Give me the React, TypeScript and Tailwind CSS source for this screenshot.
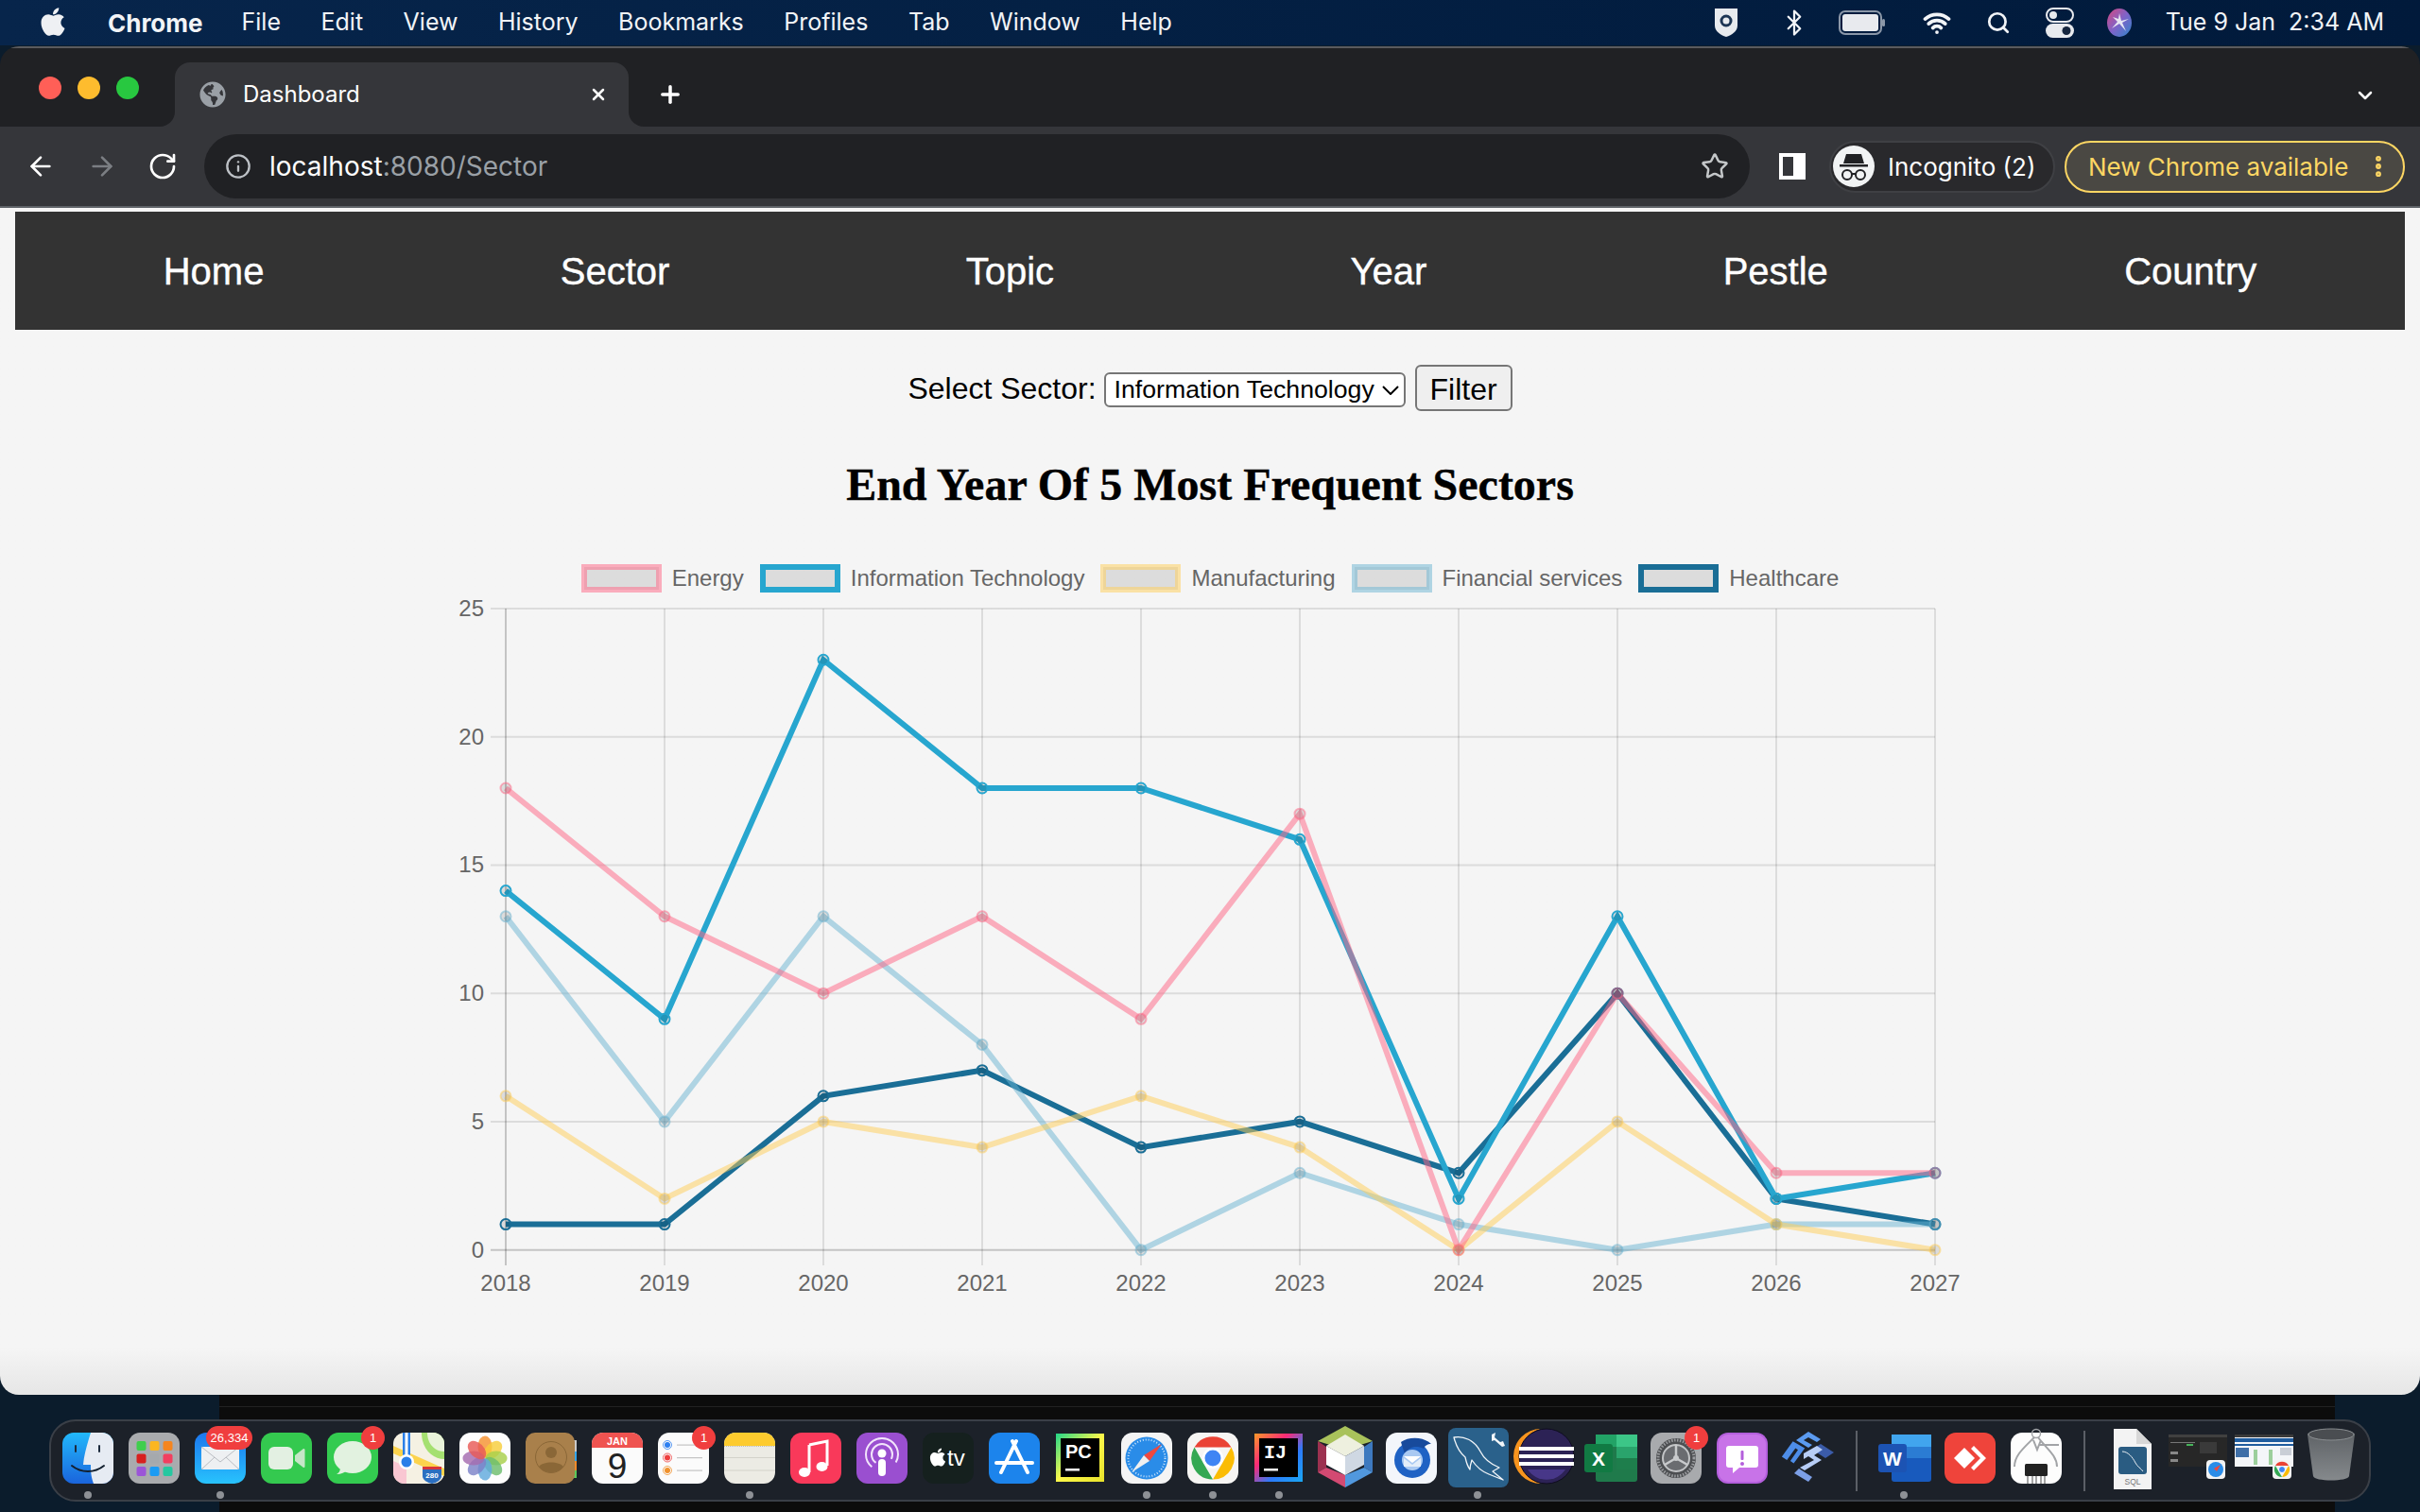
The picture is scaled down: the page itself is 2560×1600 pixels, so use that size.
import type { ReactNode } from 'react'
import { ArrowLeft, ArrowRight, Bluetooth, ChevronDown, EllipsisVertical, Info, Plus, RotateCw, Search, Star, Wifi, X } from 'lucide-react'
import { FaApple, FaGlobeAmericas } from 'react-icons/fa'

const SANS = "font-['Liberation_Sans',Arial,sans-serif]"

const YEARS = [2018, 2019, 2020, 2021, 2022, 2023, 2024, 2025, 2026, 2027]

const SERIES = [
  { name: 'Healthcare', color: '#1a6e96', data: [1, 1, 6, 7, 4, 5, 3, 10, 2, 1] },
  { name: 'Financial services', color: 'rgba(105,180,210,0.5)', data: [13, 5, 13, 8, 0, 3, 1, 0, 1, 1] },
  { name: 'Manufacturing', color: 'rgba(255,206,86,0.5)', data: [6, 2, 5, 4, 6, 4, 0, 5, 1, 0] },
  { name: 'Information Technology', color: '#27a6cf', data: [14, 9, 23, 18, 18, 16, 2, 13, 2, 3] },
  { name: 'Energy', color: 'rgba(255,99,132,0.5)', data: [18, 13, 10, 13, 9, 17, 0, 10, 3, 3] },
]

const xAt = (i: number) => 535 + 168 * i
const yAt = (v: number) => 1322.7 - 27.15 * v

function Chart() {
  return (
    <svg width={1640} height={740} viewBox="460 630 1640 740" className={`block mx-auto mt-[3px] ${SANS}`}>
      {[0, 5, 10, 15, 20, 25].map((v) => (
        <g key={v}>
          <line x1={519} x2={2047} y1={yAt(v)} y2={yAt(v)} stroke={v === 0 ? 'rgba(0,0,0,0.2)' : 'rgba(0,0,0,0.1)'} strokeWidth={2} />
          <text x={512} y={yAt(v) + 8} textAnchor="end" fontSize={24} fill="#666">{v}</text>
        </g>
      ))}
      {YEARS.map((year, i) => (
        <g key={year}>
          <line x1={xAt(i)} x2={xAt(i)} y1={644} y2={1339} stroke={i === 0 ? 'rgba(0,0,0,0.2)' : 'rgba(0,0,0,0.1)'} strokeWidth={2} />
          <text x={xAt(i)} y={1366} textAnchor="middle" fontSize={24} fill="#666">{year}</text>
        </g>
      ))}
      {SERIES.map((s) => (
        <g key={s.name}>
          <polyline
            points={s.data.map((v, i) => `${xAt(i)},${yAt(v)}`).join(' ')}
            fill="none"
            stroke={s.color}
            strokeWidth={6}
            strokeLinejoin="miter"
          />
          {s.data.map((v, i) => (
            <circle key={i} cx={xAt(i)} cy={yAt(v)} r={5.5} fill="rgba(0,0,0,0.1)" stroke={s.color} strokeWidth={2} />
          ))}
        </g>
      ))}
    </svg>
  )
}

function LegendItem({ name, color }: { name: string; color: string }) {
  return (
    <div className="flex items-center gap-[11px]">
      <div className="w-[85px] h-[30px] border-[3px]" style={{ borderColor: color }}>
        <div className="w-full h-full border-[3px] bg-[rgba(0,0,0,0.1)]" style={{ borderColor: color }} />
      </div>
      <span className="text-[24px] leading-[30px] text-[#666]">{name}</span>
    </div>
  )
}

function MenuBar() {
  const items = ['File', 'Edit', 'View', 'History', 'Bookmarks', 'Profiles', 'Tab', 'Window', 'Help']
  return (
    <div className="h-[48px] flex items-center bg-gradient-to-r from-[#07254b] to-[#011a3b] text-[#f2f4f7] text-[25px] font-['Inter',sans-serif] pr-[38px]">
      <FaApple className="ml-[41px] w-[30px] h-[34px] -mt-[3px] text-[#eef0f3]" />
      <span className="ml-[43px] font-bold text-[26px]">Chrome</span>
      <div className="flex gap-[42.5px] ml-[41px]">
        {items.map((item) => (
          <span key={item}>{item}</span>
        ))}
      </div>
      <svg viewBox="0 0 26 32" className="ml-auto w-[26px] h-[32px]">
        <path d="M1 1h24v18c0 6-6 10-12 12C7 29 1 25 1 19z" fill="#e8eaee" />
        <circle cx="13" cy="14" r="5" fill="none" stroke="#1d3554" strokeWidth="3" />
      </svg>
      <Bluetooth className="ml-[44px] w-[30px] h-[32px]" strokeWidth={1.8} />
      <svg viewBox="0 0 50 26" className="ml-[32px] w-[50px] h-[26px]">
        <rect x="1" y="1" width="44" height="24" rx="6" fill="none" stroke="#8b97a8" strokeWidth="2" />
        <rect x="4" y="4" width="38" height="18" rx="3" fill="#e8eaee" />
        <rect x="46" y="9" width="3" height="8" rx="1.5" fill="#8b97a8" />
      </svg>
      <Wifi className="ml-[39px] w-[30px] h-[30px]" strokeWidth={3} />
      <Search className="ml-[37px] w-[26px] h-[26px]" strokeWidth={2.5} />
      <svg viewBox="0 0 30 32" className="ml-[37px] w-[30px] h-[32px]">
        <rect x="1" y="1" width="28" height="14" rx="7" fill="none" stroke="#e8eaee" strokeWidth="2" />
        <circle cx="8" cy="8" r="4" fill="#e8eaee" />
        <rect x="0" y="17" width="30" height="15" rx="7.5" fill="#e8eaee" />
        <circle cx="22" cy="24.5" r="4.5" fill="#16263f" />
      </svg>
      <svg viewBox="0 0 26 30" className="ml-[35px] w-[26px] h-[30px]">
        <defs>
          <linearGradient id="siri" x1="0" y1="0" x2="1" y2="1">
            <stop offset="0" stopColor="#d6487e" />
            <stop offset="0.5" stopColor="#7f63c9" />
            <stop offset="1" stopColor="#2e86c9" />
          </linearGradient>
        </defs>
        <ellipse cx="13" cy="15" rx="13" ry="15" fill="url(#siri)" />
        <path d="M13 5l2 8 8-2-7 4 4 9-7-8-8 5 6-7-5-5 6 2z" fill="#f2f4f7" opacity="0.9" />
      </svg>
      <span className="ml-[36px] whitespace-pre">Tue 9 Jan  2:34 AM</span>
    </div>
  )
}

function IncognitoIcon() {
  return (
    <svg viewBox="0 0 44 44" className="w-[44px] h-[44px] shrink-0">
      <circle cx="22" cy="22" r="22" fill="#f1f3f4" />
      <path d="M14 9h16l3 10H11z" fill="#202124" />
      <rect x="7" y="20" width="30" height="2.5" fill="#202124" />
      <circle cx="15" cy="31" r="5" fill="none" stroke="#202124" strokeWidth="2" />
      <circle cx="29" cy="31" r="5" fill="none" stroke="#202124" strokeWidth="2" />
      <path d="M20 30h4" stroke="#202124" strokeWidth="2" />
    </svg>
  )
}

function TabStrip() {
  return (
    <div className="h-[85px] bg-[#202124] border-t-2 border-[#5a5b5e] flex items-end text-white font-['Inter',sans-serif]">
      <div className="flex gap-[17px] ml-[41px] mb-[29px]">
        <div className="w-[24px] h-[24px] rounded-full bg-[#ff5f57]" />
        <div className="w-[24px] h-[24px] rounded-full bg-[#febc2e]" />
        <div className="w-[24px] h-[24px] rounded-full bg-[#28c840]" />
      </div>
      <div className="relative ml-[38px] w-[480px] h-[68px] bg-[#35363a] rounded-t-[16px] flex items-center pl-[26px] pr-[22px]">
        <div className="absolute -left-[16px] bottom-0 w-[16px] h-[16px] bg-[#35363a]">
          <div className="w-full h-full bg-[#202124] rounded-br-[16px]" />
        </div>
        <div className="absolute -right-[16px] bottom-0 w-[16px] h-[16px] bg-[#35363a]">
          <div className="w-full h-full bg-[#202124] rounded-bl-[16px]" />
        </div>
        <FaGlobeAmericas className="w-[28px] h-[28px] text-[#9aa0a6]" />
        <span className="ml-[18px] text-[24px]">Dashboard</span>
        <X className="ml-auto w-[20px] h-[20px]" strokeWidth={3} />
      </div>
      <Plus className="ml-[30px] mb-[20px] w-[28px] h-[28px]" strokeWidth={3} />
      <ChevronDown className="ml-auto mr-[46px] mb-[21px] w-[24px] h-[24px]" strokeWidth={2.5} />
    </div>
  )
}

function Toolbar() {
  return (
    <div className="h-[84px] bg-[#35363a] flex items-center text-white font-['Inter',sans-serif]">
      <ArrowLeft className="ml-[27px] w-[32px] h-[32px]" strokeWidth={2} />
      <ArrowRight className="ml-[33px] w-[32px] h-[32px] text-[#7b7e83]" strokeWidth={2} />
      <RotateCw className="ml-[32px] w-[32px] h-[32px]" strokeWidth={2} />
      <div className="ml-[28px] w-[1635px] h-[68px] rounded-full bg-[#202124] flex items-center pl-[24px] pr-[22px]">
        <Info className="w-[28px] h-[28px] -ml-[2px] -mr-[2px] text-[#bdc1c6]" strokeWidth={2} />
        <span className="ml-[21px] text-[28px] text-white">localhost<span className="text-[#9aa0a6]">:8080/Sector</span></span>
        <Star className="ml-auto w-[30px] h-[30px] text-[#c4c7c9]" strokeWidth={2} />
      </div>
      <div className="ml-[31px] w-[28px] h-[28px] bg-white flex justify-start pl-[4px] py-[4px]">
        <div className="w-[11px] h-full bg-[#35363a]" />
      </div>
      <div className="ml-[25px] w-[239px] h-[55px] rounded-full bg-[#29292c] border-2 border-[#3f4044] flex items-center pl-[2px] gap-[14px]">
        <IncognitoIcon />
        <span className="text-[26px] whitespace-nowrap">Incognito (2)</span>
      </div>
      <div className="ml-[10px] w-[360px] h-[55px] rounded-full bg-[#4a4843] border-2 border-[#fdd663] flex items-center pl-[23px] text-[#fdd663]">
        <span className="text-[26px] whitespace-nowrap">New Chrome available</span>
        <EllipsisVertical className="ml-auto mr-[12px] w-[28px] h-[28px]" strokeWidth={3} />
      </div>
    </div>
  )
}

function Page() {
  const nav = ['Home', 'Sector', 'Topic', 'Year', 'Pestle', 'Country']
  const legend = ['Energy', 'Information Technology', 'Manufacturing', 'Financial services', 'Healthcare']
  return (
    <div className={`h-[1256px] pt-[4px] bg-gradient-to-b from-[#f5f5f5] via-[#f5f5f5] via-[96%] to-[#e6e6e6] ${SANS}`}>
      <div className="mx-[16px] h-[125px] bg-[#333] flex items-center justify-around text-white text-[40px] [-webkit-text-stroke:0.4px_white]">
        {nav.map((item) => (
          <span key={item}>{item}</span>
        ))}
      </div>
      <div className="mt-[37px] h-[49px] flex items-center justify-center text-[32px] text-black">
        <span>Select Sector:</span>
        <div className="relative ml-[8px] mt-[4px]">
          <select className="block appearance-none w-[319px] h-[37px] bg-white border-2 border-[#767676] rounded-[6px] pl-[9px] text-[26.67px] leading-none text-black">
            <option>Information Technology</option>
          </select>
          <svg viewBox="0 0 18 10" className="absolute right-[7px] top-[14px] w-[18px] h-[10px]">
            <path d="M1 1l8 8 8-8" fill="none" stroke="#000" strokeWidth="2" />
          </svg>
        </div>
        <button className="ml-[10px] w-[103px] h-[49px] bg-[#efefef] border-2 border-[#767676] rounded-[6px] text-[32px] text-black">Filter</button>
      </div>
      <h1 className="mt-[50px] h-[56px] leading-[56px] text-center text-[48px] font-bold text-black font-['Liberation_Serif','Times_New_Roman',serif] [-webkit-text-stroke:0.4px_black]">
        End Year Of 5 Most Frequent Sectors
      </h1>
      <div className="mt-[56px] flex justify-center gap-[17px]">
        {legend.map((name) => (
          <LegendItem key={name} name={name} color={SERIES.find((s) => s.name === name)!.color} />
        ))}
      </div>
      <Chart />
    </div>
  )
}

function Tile({ children, fill }: { children?: ReactNode; fill: string }) {
  return (
    <>
      <rect width="54" height="54" rx="12" fill={fill} />
      {children}
    </>
  )
}

const ICONS: Record<string, ReactNode> = {
  finder: (
    <>
      <defs>
        <linearGradient id="fd" x1="0" y1="0" x2="0" y2="1">
          <stop offset="0" stopColor="#22b8fb" />
          <stop offset="1" stopColor="#1a64dc" />
        </linearGradient>
      </defs>
      <Tile fill="url(#fd)">
        <path d="M30 0h12a12 12 0 0 1 12 12v30a12 12 0 0 1-12 12H33c-3-8-3-14-3-20h-8c1-12 5-24 8-34z" fill="#e6ebf3" />
        <path d="M14 14v6M39 14v6" stroke="#1c2a3c" strokeWidth="2" strokeLinecap="round" />
        <path d="M10 35c10 8 24 8 34 0" fill="none" stroke="#13202f" strokeWidth="2" strokeLinecap="round" />
      </Tile>
    </>
  ),
  launchpad: (
    <Tile fill="#a9abae">
      {['#3fce4d', '#fbb621', '#f5851f', '#d8201f', '#a5a9ad', '#f23f5f', '#9b55d8', '#1b9bf4', '#26c8a0'].map((c, i) => (
        <rect key={i} x={8.5 + (i % 3) * 14} y={9 + Math.floor(i / 3) * 13.5} width="10" height="10" rx="2" fill={c} />
      ))}
    </Tile>
  ),
  mail: (
    <>
      <defs>
        <linearGradient id="ml" x1="0" y1="0" x2="0" y2="1">
          <stop offset="0" stopColor="#1b76ee" />
          <stop offset="1" stopColor="#28c3fd" />
        </linearGradient>
      </defs>
      <Tile fill="url(#ml)">
        <rect x="7" y="15" width="40" height="24" rx="2" fill="#eef0f2" />
        <path d="M7 15l20 16 20-16M7 39l14-13M47 39L33 26" fill="none" stroke="#b9bdc2" strokeWidth="1" />
      </Tile>
    </>
  ),
  facetime: (
    <Tile fill="#34c94f">
      <rect x="8" y="15" width="26" height="24" rx="6" fill="#e3f0e2" />
      <path d="M36 24l9-7c1 0 1.500 .5 1.500 1.500v17c0 1-.5 1.500-1.500 1.500l-9-7z" fill="#c6e6c8" />
    </Tile>
  ),
  messages: (
    <Tile fill="#33cb50">
      <ellipse cx="27" cy="26" rx="20" ry="17" fill="#e2f2e0" />
      <path d="M14 37c0 4-2 6-4 7 5 0 9-2 11-4z" fill="#e2f2e0" />
    </Tile>
  ),
  maps: (
    <Tile fill="#f5f1e3">
      <path d="M30 0h12a12 12 0 0 1 12 12v16C42 28 30 18 30 0z" fill="#a5e070" />
      <path d="M36 0c0 12 8 20 18 20V12A12 12 0 0 0 42 0z" fill="#e9f3da" />
      <path d="M0 14l54 24v8L0 22z" fill="#fcd34d" />
      <path d="M0 30v12a12 12 0 0 0 12 12h2V36z" fill="#f9c7d2" />
      <rect x="10" y="0" width="8" height="26" fill="#2a7fe8" />
      <rect x="12.500" y="0" width="3" height="24" fill="#fff" />
      <circle cx="14" cy="31" r="8" fill="#fff" />
      <circle cx="14" cy="31" r="5.500" fill="#2a7fe8" />
      <path d="M31 36h20v10c0 4-5 7-10 8-5-1-10-4-10-8z" fill="#2b6fc0" />
      <path d="M31 36h20v3H31z" fill="#d8353a" />
      <text x="41" y="48" textAnchor="middle" fontSize="8" fontWeight="700" fill="#fff" fontFamily="Liberation Sans">280</text>
    </Tile>
  ),
  photos: (
    <Tile fill="#fdfdfd">
      {['#f59331', '#f6cd3a', '#a8cf4b', '#6cbd6d', '#60a9dd', '#7b83c8', '#a56bb0', '#e85a57'].map((c, i) => (
        <ellipse key={i} cx="27" cy="15" rx="7.500" ry="11.500" fill={c} opacity="0.82" transform={`rotate(${i * 45} 27 27)`} />
      ))}
    </Tile>
  ),
  contacts: (
    <>
      <rect x="46" y="8" width="8" height="12" fill="#c9c9c9" />
      <rect x="46" y="20" width="8" height="10" fill="#35a7ee" />
      <rect x="46" y="30" width="8" height="10" fill="#f08b2a" />
      <rect x="46" y="40" width="8" height="8" fill="#5ec95b" />
      <rect width="52" height="54" rx="10" fill="#a9804b" />
      <circle cx="27" cy="26" r="16.500" fill="none" stroke="#8a6737" strokeWidth="1" />
      <circle cx="27" cy="21" r="6" fill="#8a6737" />
      <path d="M14 36c4-6 22-6 26 0-6 8-20 8-26 0z" fill="#8a6737" />
    </>
  ),
  calendar: (
    <Tile fill="#fbfbfb">
      <path d="M0 16V12A12 12 0 0 1 12 0h30a12 12 0 0 1 12 12v4z" fill="#ef5350" />
      <text x="27" y="13" textAnchor="middle" fontSize="11" fontWeight="700" fill="#fff" fontFamily="Liberation Sans">JAN</text>
      <text x="27" y="48" textAnchor="middle" fontSize="37" fill="#222" fontFamily="Liberation Sans">9</text>
    </Tile>
  ),
  reminders: (
    <Tile fill="#fbfbfb">
      {['#2d7ff0', '#ee3f3f', '#f0922e'].map((c, i) => (
        <g key={c}>
          <circle cx="10" cy={13 + i * 13.500} r="3" fill={c} />
          <circle cx="10" cy={13 + i * 13.500} r="4.500" fill="none" stroke={c} strokeWidth="0.800" />
          <rect x="20" y={12.500 + i * 13.500} width="27" height="1.200" fill="#c4c4c4" />
        </g>
      ))}
    </Tile>
  ),
  notes: (
    <Tile fill="#ecebe4">
      <path d="M0 14V12A12 12 0 0 1 12 0h30a12 12 0 0 1 12 12v2z" fill="#fdcb2e" />
      <path d="M0 14.500h54" stroke="#bdbcb2" strokeDasharray="1 1" />
      <path d="M0 26.500h54M0 40h54" stroke="#d3d2ca" />
    </Tile>
  ),
  music: (
    <Tile fill="#f9395a">
      <path d="M20 13l19-4v26" fill="none" stroke="#fff" strokeWidth="3" />
      <path d="M20 13v29" stroke="#fff" strokeWidth="3" />
      <ellipse cx="15" cy="42" rx="6" ry="5" fill="#fff" />
      <ellipse cx="33.500" cy="36" rx="6" ry="5" fill="#fff" />
    </Tile>
  ),
  podcasts: (
    <Tile fill="#9a4fd0">
      <circle cx="27" cy="23" r="17" fill="none" stroke="#f2e4fb" strokeWidth="2" strokeDasharray="78 29" strokeDashoffset="-38" />
      <circle cx="27" cy="23" r="11" fill="none" stroke="#f2e4fb" strokeWidth="2" strokeDasharray="50 19" strokeDashoffset="-24" />
      <circle cx="27" cy="22" r="4.500" fill="#fff" />
      <rect x="23" y="28" width="8" height="18" rx="4" fill="#fff" />
    </Tile>
  ),
  tv: (
    <Tile fill="#15201e">
      <foreignObject x="6" y="15" width="20" height="22">
        <FaApple className="w-[20px] h-[22px] text-white" />
      </foreignObject>
      <text x="26" y="35" fontSize="24" fill="#fff" fontFamily="Liberation Sans">tv</text>
    </Tile>
  ),
  appstore: (
    <Tile fill="#1c84ec">
      <path d="M29 9L13 42M25 9l16 33M8 32h38" stroke="#fff" strokeWidth="4" strokeLinecap="round" fill="none" />
    </Tile>
  ),
  pycharm: (
    <>
      <defs>
        <linearGradient id="pc" x1="0" y1="0" x2="1" y2="1">
          <stop offset="0" stopColor="#21d789" />
          <stop offset="0.5" stopColor="#fcf84a" />
          <stop offset="1" stopColor="#e8e22b" />
        </linearGradient>
      </defs>
      <rect x="1" y="1" width="51" height="51" fill="url(#pc)" />
      <rect x="6" y="6" width="41" height="41" fill="#000" />
      <text x="11" y="27" fontSize="20" fontWeight="700" fill="#fff" fontFamily="Liberation Sans">PC</text>
      <rect x="11" y="38" width="15" height="2.500" fill="#fff" />
    </>
  ),
  safari: (
    <Tile fill="#f4f4f4">
      <circle cx="27" cy="27" r="22.500" fill="#2a8ce8" />
      <circle cx="27" cy="27" r="19.500" fill="none" stroke="#cfe6fb" strokeWidth="2" strokeDasharray="1 2" />
      <path d="M43 12L24 24l6 6z" fill="#f0483e" />
      <path d="M11 42l19-12-6-6z" fill="#f0f0f0" />
    </Tile>
  ),
  chrome: (
    <Tile fill="#f6f5f3">
      <path d="M7.500 15.500A22.500 22.500 0 0 1 46.500 15.500L27 15.500z" fill="#ea4335" />
      <path d="M46.500 15.500A22.500 22.500 0 0 1 27 49.500L36.800 32.700z" fill="#fbbc04" />
      <path d="M27 49.500A22.500 22.500 0 0 1 7.500 15.500L17.200 32.700z" fill="#34a853" />
      <circle cx="27" cy="27" r="11" fill="#fff" />
      <circle cx="27" cy="27" r="8.500" fill="#3f85f4" />
    </Tile>
  ),
  idea: (
    <>
      <defs>
        <linearGradient id="ij" x1="0" y1="0" x2="1" y2="1">
          <stop offset="0" stopColor="#fb9a28" />
          <stop offset="0.35" stopColor="#fc2a76" />
          <stop offset="0.65" stopColor="#2c7bfb" />
          <stop offset="1" stopColor="#1aa7f2" />
        </linearGradient>
      </defs>
      <rect x="1" y="1" width="51" height="51" fill="url(#ij)" />
      <rect x="6" y="6" width="41" height="41" fill="#000" />
      <text x="11" y="27" fontSize="20" fontWeight="700" fill="#fff" fontFamily="Liberation Mono">IJ</text>
      <rect x="11" y="38" width="15" height="2.500" fill="#fff" />
    </>
  ),
  netbeans: (
    <>
      <path d="M27-7l29 16L27 18 -2 9z" fill="#a9c25b" />
      <path d="M-2 9v33l9-5V15z" fill="#9c3150" />
      <path d="M56 9v33l-9-5V15z" fill="#3d79bf" />
      <path d="M-2 42l29 16V45L7 37z" fill="#d34a72" />
      <path d="M56 42L27 58V45l20-8z" fill="#5198de" />
      <path d="M27 2l20 12L27 25 7 14z" fill="#eef0df" />
      <path d="M7 14l20 11v20L7 34z" fill="#fff" />
      <path d="M47 14L27 25v20l20-11z" fill="#cfd8e3" />
    </>
  ),
  thunderbird: (
    <Tile fill="#f3f6fb">
      <circle cx="28" cy="29" r="19" fill="#1f62c4" />
      <path d="M16 10c8-6 24-6 32 2-4 0-7 2-8 5-8-4-16-2-20 6-1-5-3-9-4-13z" fill="#174a9c" />
      <circle cx="28" cy="29" r="11" fill="#a9c9f2" />
      <path d="M19 25h18l-9 7z" fill="#fff" />
      <path d="M19 27v9h18v-9l-9 7z" fill="#e3edf9" />
    </Tile>
  ),
  workbench: (
    <>
      <rect x="-4" y="-5" width="64" height="63" rx="8" fill="#2a618b" />
      <path
        d="M2 5C12 3 24 8 30 20c4 8 10 13 20 17l-7 4 11 9-15-6c-8-3-14-9-18-15-1 3-2 7-2 10-3-4-4-8-5-13C8 21 4 13 2 5z"
        fill="none"
        stroke="#f2f6f9"
        strokeWidth="1.300"
        strokeLinejoin="round"
      />
      <path d="M42 2l4-2-1 5 6 5 3-1 2 5-3 1-8-7-3 1z" fill="#f2f6f9" />
    </>
  ),
  eclipse: (
    <>
      <path d="M24-4a30 30 0 0 0 0 58 29 29 0 0 1 0-58z" fill="#f7941e" />
      <circle cx="30" cy="25" r="29" fill="#2c2255" stroke="#0f0c20" strokeWidth="1" />
      <rect x="1" y="15" width="58" height="4" fill="#fff" />
      <rect x="1" y="23" width="58" height="4" fill="#fff" />
      <rect x="1" y="31" width="58" height="4" fill="#fff" />
      <path d="M10 39h40a24 24 0 0 1-40 0z" fill="#473788" />
    </>
  ),
  excel: (
    <>
      <rect x="12" y="2" width="44" height="50" rx="3" fill="#1f7a4b" />
      <rect x="34" y="2" width="22" height="13" fill="#3cc687" />
      <rect x="12" y="2" width="22" height="13" fill="#22a366" />
      <rect x="34" y="15" width="22" height="12" fill="#2aa46c" />
      <rect x="34" y="27" width="22" height="12" fill="#1e7e4c" />
      <rect x="0" y="12" width="30" height="30" rx="3" fill="#117a43" />
      <text x="15" y="35" textAnchor="middle" fontSize="21" fontWeight="700" fill="#fff" fontFamily="Liberation Sans">X</text>
    </>
  ),
  settings: (
    <Tile fill="#a8aaad">
      <circle cx="27" cy="27" r="21" fill="#4d4f52" />
      <circle cx="27" cy="27" r="19" fill="none" stroke="#9a9c9f" strokeWidth="3" strokeDasharray="1.500 1.500" />
      <circle cx="27" cy="27" r="14" fill="#6a6c70" stroke="#c2c4c6" strokeWidth="2" />
      <path d="M27 27V13M27 27L15 34M27 27l12 7" stroke="#c8cacc" strokeWidth="2.500" />
      <circle cx="27" cy="27" r="3" fill="#c8cacc" />
    </Tile>
  ),
  feedback: (
    <Tile fill="#b45fdc">
      <rect x="2" y="2" width="50" height="50" rx="10" fill="#c873e8" />
      <path d="M13 14h28a3 3 0 0 1 3 3v17a3 3 0 0 1-3 3H24l-7 6v-6h-4a3 3 0 0 1-3-3V17a3 3 0 0 1 3-3z" fill="#fff" />
      <rect x="25.500" y="19" width="3" height="10" rx="1" fill="#b45fdc" />
      <circle cx="27" cy="33" r="2" fill="#b45fdc" />
    </Tile>
  ),
  maze: (
    <>
      <path d="M27-1l13 8-4 3-9-5-5 3 9 5-4 3-13-8z" fill="#5b9bf0" />
      <path d="M14 8l-13 18 6 4 10-14 3 2-9 13 4 3 13-18z" fill="#4d8de8" transform="translate(-2 2) scale(.9)" />
      <path d="M40 12l14 9-9 6-14-9z" fill="#3b5ba8" />
      <path d="M22 22l14-8 6 4-9 6 8 5-18 11-5-3 15-8-6-4-5 3z" fill="#b7cdf6" />
      <path d="M17 38l14 9-4 5-15-9z" fill="#7c9fe6" />
    </>
  ),
  word: (
    <>
      <rect x="14" y="2" width="42" height="50" rx="3" fill="#185abd" />
      <rect x="14" y="2" width="42" height="13" fill="#41a5ee" />
      <rect x="14" y="15" width="42" height="12" fill="#2b7cd3" />
      <rect x="0" y="12" width="30" height="30" rx="3" fill="#1c53b3" />
      <text x="15" y="35" textAnchor="middle" fontSize="21" fontWeight="700" fill="#fff" fontFamily="Liberation Sans">W</text>
    </>
  ),
  anydesk: (
    <Tile fill="#ef443b">
      <path d="M21 16l11 11-11 11-11-11z" fill="#fff" />
      <path d="M31 14l13 13-13 13-3-3 10-10-10-10z" fill="#fff" />
    </Tile>
  ),
  instruments: (
    <Tile fill="#fdfdfd">
      <circle cx="27" cy="1" r="4.500" fill="none" stroke="#a2a4a7" strokeWidth="1.500" />
      <path d="M25 5C14 16 4 24 4 36M29 5c8 11 20 19 20 31M24 8l4 10 4-10M30 13h21" fill="none" stroke="#a2a4a7" strokeWidth="2" />
      <rect x="15" y="33" width="24" height="13" rx="1.500" fill="#222" />
      <path d="M18 46v8M23 46v8M27 46v8M32 46v8M36 46v8" stroke="#888" strokeWidth="1.500" />
    </Tile>
  ),
  sqlfile: (
    <>
      <path d="M0 -2h24l16 16v48H0z" fill="#f3f3f3" transform="translate(7 -2)" />
      <path d="M31-4l16 16H31z" fill="#d7d7d7" />
      <rect x="12" y="15" width="30" height="29" rx="3" fill="#2a5c82" />
      <path d="M16 20c6 0 11 6 14 12 2 4 6 6 8 9" fill="none" stroke="#e8eef3" strokeWidth="1" />
      <text x="27" y="55" textAnchor="middle" fontSize="8.500" fill="#777" fontFamily="Liberation Sans">SQL</text>
    </>
  ),
  stackDark: (
    <>
      <rect x="-5" y="2" width="62" height="34" fill="#272727" />
      <rect x="-5" y="2" width="62" height="3" fill="#404040" />
      <rect x="-3" y="10" width="26" height="1" fill="#777" />
      <rect x="14" y="12" width="7" height="2" fill="#47b35a" />
      <rect x="-3" y="20" width="8" height="3" fill="#888" />
      <rect x="-3" y="28" width="8" height="3" fill="#888" />
      <rect x="28" y="10" width="18" height="12" fill="#3a3a3a" />
      <rect x="35" y="29" width="20" height="20" rx="4" fill="#f3f3f3" />
      <circle cx="45" cy="39" r="8" fill="#2a8ce8" />
      <path d="M50 34l-7 4 3 3z" fill="#f0483e" />
    </>
  ),
  stackWeb: (
    <>
      <rect x="-5" y="2" width="62" height="34" fill="#f4f6f9" />
      <rect x="-5" y="2" width="62" height="3" fill="#3a3a3a" />
      <rect x="-5" y="6" width="62" height="4" fill="#1f5c9e" />
      <rect x="-5" y="12" width="62" height="2" fill="#1f5c9e" />
      <rect x="-4" y="16" width="14" height="10" fill="#3f6fa8" />
      <rect x="15" y="18" width="4" height="16" fill="#9ccf9c" />
      <rect x="31" y="18" width="4" height="16" fill="#9ccf9c" />
      <rect x="43" y="16" width="12" height="8" fill="#c9ced6" />
      <rect x="35" y="29" width="20" height="20" rx="4" fill="#f3f3f3" />
      <path d="M38 35a8 8 0 0 1 14 0h-7z" fill="#ea4335" />
      <path d="M52 35a8 8 0 0 1-7 12l3.500-6z" fill="#fbbc04" />
      <path d="M45 47a8 8 0 0 1-7-12l3.500 6z" fill="#34a853" />
      <circle cx="45" cy="39" r="3.500" fill="#3f85f4" stroke="#fff" />
    </>
  ),
  trash: (
    <>
      <defs>
        <linearGradient id="tr" x1="0" y1="0" x2="0" y2="1">
          <stop offset="0" stopColor="#5c6064" />
          <stop offset="1" stopColor="#85898c" />
        </linearGradient>
      </defs>
      <path d="M2 2c0-7 50-7 50 0l-6 44c-1 6-37 6-38 0z" fill="url(#tr)" />
      <ellipse cx="27" cy="2" rx="24" ry="6" fill="#4a4d51" stroke="#8a8e91" strokeWidth="1" />
    </>
  ),
}

const DOCK: { key: string; dot?: boolean; badge?: string }[] = [
  { key: 'finder', dot: true },
  { key: 'launchpad' },
  { key: 'mail', dot: true, badge: '26,334' },
  { key: 'facetime' },
  { key: 'messages', badge: '1' },
  { key: 'maps' },
  { key: 'photos' },
  { key: 'contacts' },
  { key: 'calendar' },
  { key: 'reminders', badge: '1' },
  { key: 'notes', dot: true },
  { key: 'music' },
  { key: 'podcasts' },
  { key: 'tv' },
  { key: 'appstore' },
  { key: 'pycharm' },
  { key: 'safari', dot: true },
  { key: 'chrome', dot: true },
  { key: 'idea', dot: true },
  { key: 'netbeans' },
  { key: 'thunderbird' },
  { key: 'workbench', dot: true },
  { key: 'eclipse' },
  { key: 'excel' },
  { key: 'settings', badge: '1' },
  { key: 'feedback' },
  { key: 'maze' },
]

const DOCK_AFTER: { key: string; dot?: boolean }[] = [{ key: 'word', dot: true }, { key: 'anydesk' }, { key: 'instruments' }]
const DOCK_FILES = ['sqlfile', 'stackDark', 'stackWeb', 'trash']

function DockItem({ name, dot, badge }: { name: string; dot?: boolean; badge?: string }) {
  return (
    <div className="relative w-[70px] flex flex-col items-center shrink-0">
      <svg viewBox="0 0 54 54" className="w-[54px] h-[54px] overflow-visible">{ICONS[name]}</svg>
      {dot ? <div className="mt-[8px] w-[8px] h-[8px] rounded-full bg-[#8e9196]" /> : <div className="mt-[8px] h-[8px]" />}
      {badge && (
        <span
          className={`absolute -top-[7px] h-[25px] flex items-center justify-center rounded-full bg-[#f03e3e] text-white text-[13px] ${SANS} ${
            badge.length > 1 ? 'left-[20px] w-[49px]' : 'left-[44px] w-[25px]'
          }`}
        >
          {badge}
        </span>
      )}
    </div>
  )
}

function Dock() {
  return (
    <div className="relative mx-[52px] mt-[26px] h-[87px] w-[2456px] rounded-[28px] border-2 border-[#3a3f47] bg-[#1c2129] flex pl-[4px] pt-[12px]">
      {DOCK.map((item) => (
        <DockItem key={item.key} name={item.key} dot={item.dot} badge={item.badge} />
      ))}
      <div className="w-[31px] flex justify-center shrink-0">
        <div className="w-[2px] h-[64px] -mt-[2px] bg-[#5b5f66]" />
      </div>
      {DOCK_AFTER.map((item) => (
        <DockItem key={item.key} name={item.key} dot={item.dot} />
      ))}
      <div className="w-[32px] flex justify-center shrink-0">
        <div className="w-[2px] h-[64px] -mt-[2px] bg-[#5b5f66]" />
      </div>
      {DOCK_FILES.map((name) => (
        <DockItem key={name} name={name} />
      ))}
    </div>
  )
}

export default function App() {
  return (
    <div className="relative w-[2560px] h-[1600px] overflow-hidden bg-[#0b1c2c]">
      {/* window sitting behind the browser, only its lower edge shows */}
      <div className="absolute left-[232px] top-[1440px] w-[2238px] h-[160px] bg-[#0c0c0c] border-t border-[#0c0c0c]">
        <div className="mt-[47px] h-[1px] bg-[#222]" />
      </div>
      <div className="relative">
        <MenuBar />
        <div className="mt-[1px] rounded-[20px] overflow-hidden">
          <TabStrip />
          <Toolbar />
          <div className="h-[2px] bg-[#5f6368]" />
          <Page />
        </div>
        <Dock />
      </div>
    </div>
  )
}
